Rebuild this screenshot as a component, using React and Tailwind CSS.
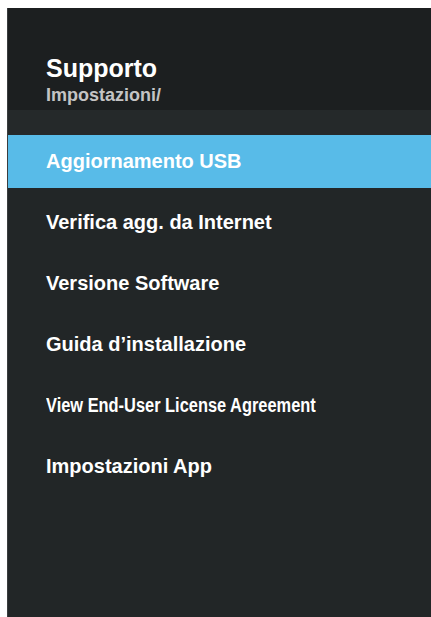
export default function App() {
  const items = [
    { label: "Aggiornamento USB", active: true },
    { label: "Verifica agg. da Internet" },
    { label: "Versione Software" },
    { label: "Guida d\u2019installazione" },
    { label: "View End-User License Agreement", narrow: true },
    { label: "Impostazioni App" },
  ];

  return (
    <div
      className="h-[617px] w-full bg-white pl-[7px] pt-[8px]"
      style={{ fontFamily: '"Liberation Sans", Arial, sans-serif' }}
    >
      <div className="flex h-full flex-col border-l border-[#3a3d3e] bg-[#222627]">
        {/* Header */}
        <div className="h-[102px] bg-[#1c1f20] pl-[38px] pt-[46px]">
          <h1 className="text-[25px] font-bold leading-[29px] text-white">Supporto</h1>
          <p className="mt-[2px] text-[18px] font-bold leading-[20px] text-[#c4c4c4]">
            Impostazioni/
          </p>
        </div>
        <div className="h-[25px] bg-[#25292a]" />

        {/* Menu */}
        <ul className="flex flex-col">
          {items.map((item, i) => (
            <li
              key={item.label}
              className={`flex h-[53px] items-center pb-[2px] pl-[38px] text-[20px] font-bold text-white ${
                i > 0 ? "mt-[8px]" : ""
              } ${item.active ? "bg-[#58bbe8]" : ""}`}
            >
              {item.narrow ? (
                <span className="origin-left scale-x-[0.82] whitespace-nowrap">{item.label}</span>
              ) : (
                item.label
              )}
            </li>
          ))}
        </ul>
      </div>
    </div>
  );
}
